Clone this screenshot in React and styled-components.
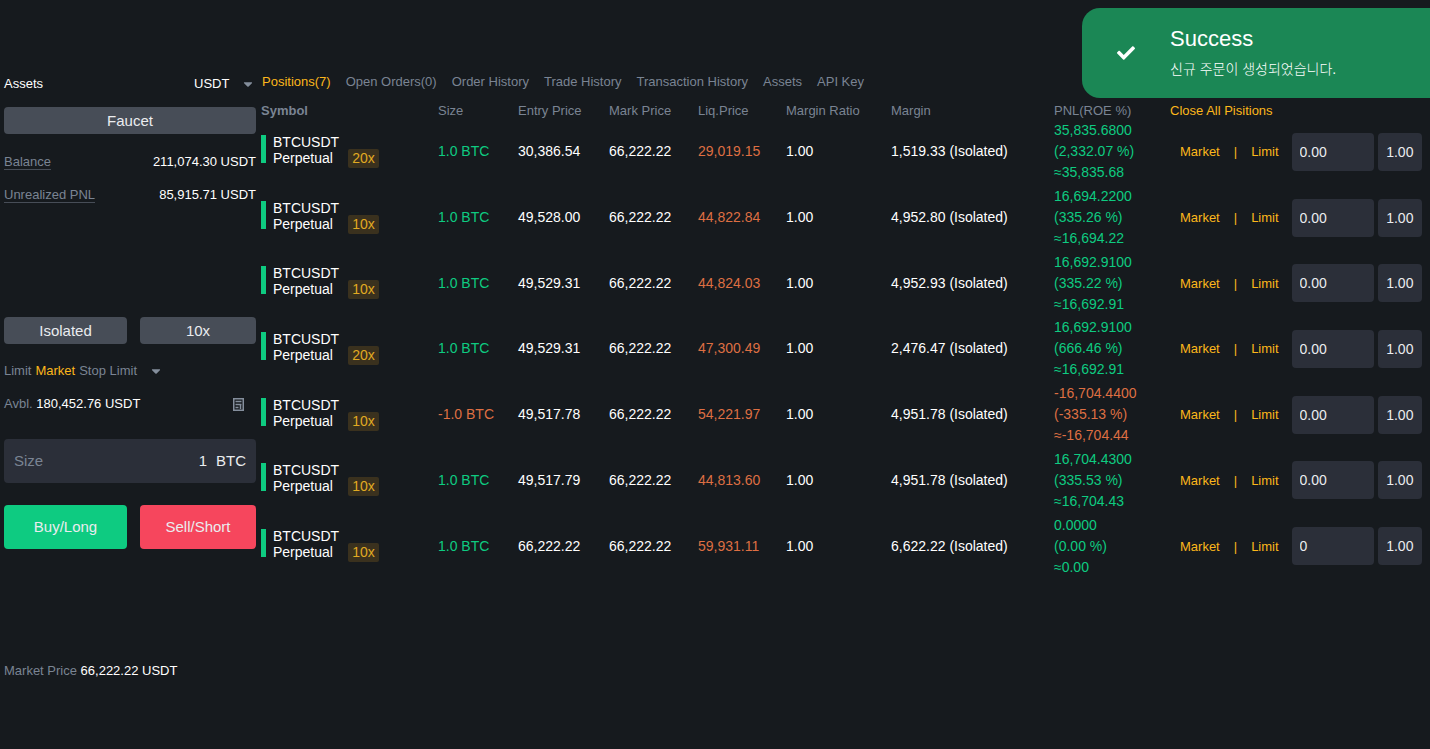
import React, { useState } from "react";
import styled, { createGlobalStyle } from "styled-components";
import { FaCaretDown, FaCheck } from "react-icons/fa";

const GlobalStyle = createGlobalStyle`
  * {
    box-sizing: border-box;
  }

  body {
    margin: 0;
    background: #161a1e;
    color: #fff;
    font-family: "Liberation Sans", "Noto Sans CJK KR", Arial, sans-serif;
    font-size: 13px;
    line-height: 20px;
  }

  button, input, select {
    margin: 0;
    border: 0;
    color: inherit;
    font: inherit;
  }

  button {
    padding: 0;
    background: none;
    cursor: pointer;
  }
`;

const Page = styled.main`
  display: flex;
  align-items: flex-start;
  gap: 5px;
  min-height: 100vh;
  padding: 72px 0 0 4px;
`;

const Sidebar = styled.aside`
  flex: 0 0 252px;
  min-width: 0;
`;

const Line = styled.div`
  display: flex;
  align-items: center;
  justify-content: ${props => props.$justify || "space-between"};
  gap: 4px;
  height: ${props => props.$height || 33}px;
`;

const Heading = styled.h2`
  margin: 0;
  font-size: 13px;
  font-weight: 400;
`;

const SelectBox = styled.label`
  display: flex;
  align-items: center;
  width: 62px;
`;

const Select = styled.select`
  flex: 1;
  width: 46px;
  padding: 0;
  background: transparent;
  appearance: none;
  outline: none;
`;

const Caret = styled(FaCaretDown)`
  width: 16px;
  height: 14px;
  color: #848e9c;
`;

const Pair = styled.div`
  display: grid;
  grid-template-columns: 123fr 116fr;
  gap: 13px;
`;

const GreyButton = styled.button`
  display: block;
  width: 100%;
  height: 27px;
  border-radius: 4px;
  background: #474d57;
  color: #eaecef;
  font-size: 15px;
`;

const OrderButton = styled.button`
  height: 44px;
  border-radius: 4px;
  background: ${props => props.color};
  color: #eaecef;
  font-size: 15px;
`;

const Label = styled.span`
  color: #7a8493;
`;

const Underlined = styled(Label)`
  border-bottom: 1px solid #474d57;
  line-height: 15px;
`;

const AssetBlock = styled.section`
  height: 245px;
`;

const AssetLines = styled.div`
  padding-top: 10px;
`;

const TypeButton = styled.button`
  color: ${props => (props.$active ? "#fcb71b" : "#7a8493")};
`;

const CaretButton = styled.button`
  display: flex;
  padding-left: 7px;
`;

const IconButton = styled.button`
  display: flex;
  padding: 2px 12px 0 0;
  color: #848e9c;
`;

const SizeField = styled.label`
  display: flex;
  align-items: center;
  height: 44px;
  margin: 19px 0 22px;
  padding: 0 10px;
  border-radius: 4px;
  background: #2b2f39;
  color: #eaecef;
  font-size: 15px;
`;

const SizeInput = styled.input`
  flex: 1;
  width: 0;
  min-width: 0;
  padding: 0 9px;
  background: transparent;
  text-align: right;
  outline: none;
`;

const MarketPrice = styled.p`
  margin: 112px 0 0;
`;

const Content = styled.section`
  flex: 1;
  min-width: 0;
`;

const Tabs = styled.nav`
  display: flex;
  gap: 15px;
  height: 29px;
  padding-left: 1px;
`;

const Tab = styled.button`
  height: 20px;
  color: ${props => (props.$active ? "#fcb71b" : "#7a8493")};
`;

const Table = styled.table`
  width: 100%;
  height: 478px;
  border-collapse: collapse;
  table-layout: fixed;
  font-size: 14px;
  white-space: nowrap;
`;

const Th = styled.th`
  width: ${props => props.$width}px;
  height: 18px;
  padding: 2px 0 0;
  color: #7a8493;
  font-size: 13px;
  font-weight: ${props => (props.$bold ? 700 : 400)};
  line-height: 16px;
  text-align: left;
`;

const Td = styled.td`
  padding: 0;
  color: ${props => props.color || "#fff"};
  line-height: 21px;
`;

const SymbolCell = styled.div`
  display: flex;
  height: 36px;
  line-height: 16px;
  padding-bottom: 2px;
`;

const SideBar = styled.span`
  width: 5px;
  height: 28px;
  margin: 1px 7px 0 0;
  background: #0ecb81;
`;

const Badge = styled.span`
  align-self: flex-end;
  margin-left: 9px;
  padding: 0 4px;
  border-radius: 2px;
  background: #3a311e;
  color: #e0aa22;
  line-height: 19px;
`;

const CloseAll = styled.button`
  color: #fcb71b;
`;

const Actions = styled.div`
  display: flex;
  align-items: center;
  padding: 0 8px 0 10px;
  color: #fcb71b;
  font-size: 13px;
`;

const Divider = styled.span`
  margin: 0 14px;
`;

const CellInput = styled.input`
  flex: ${props => props.$size} 1 ${props => props.$size}px;
  width: 0;
  min-width: 0;
  height: 38px;
  margin-left: ${props => props.$gap}px;
  padding: 0 8px;
  border-radius: 4px;
  background: #2b2f39;
  color: #eaecef;
  font-size: 14px;
  outline: none;
`;

const Toast = styled.div`
  position: fixed;
  top: 8px;
  right: 0;
  display: flex;
  align-items: center;
  width: 348px;
  height: 90px;
  border-radius: 18px 0 0 18px;
  background: #1b8755;
`;

const ToastIcon = styled.div`
  display: flex;
  justify-content: center;
  width: 88px;
  font-size: 18px;
`;

const ToastTitle = styled.h3`
  margin: 0;
  font-size: 22px;
  font-weight: 400;
  line-height: 32px;
`;

const ToastText = styled.p`
  margin: 0;
  font-size: 14px;
  font-weight: 300;
  line-height: 28px;
`;

const GREEN = "#0ecb81";
const ORANGE = "#de6f43";

const tabs = [
  "Positions(7)",
  "Open Orders(0)",
  "Order History",
  "Trade History",
  "Transaction History",
  "Assets",
  "API Key"
];

const columns = [
  ["Symbol", 177],
  ["Size", 80],
  ["Entry Price", 91],
  ["Mark Price", 89],
  ["Liq.Price", 88],
  ["Margin Ratio", 105],
  ["Margin", 163],
  ["PNL(ROE %)", 116]
];

const positions = [
  { lev: "20x", size: "1.0", entry: "30,386.54", liq: "29,019.15", margin: "1,519.33", pnl: "35,835.6800", roe: "2,332.07", approx: "35,835.68", price: "0.00" },
  { lev: "10x", size: "1.0", entry: "49,528.00", liq: "44,822.84", margin: "4,952.80", pnl: "16,694.2200", roe: "335.26", approx: "16,694.22", price: "0.00" },
  { lev: "10x", size: "1.0", entry: "49,529.31", liq: "44,824.03", margin: "4,952.93", pnl: "16,692.9100", roe: "335.22", approx: "16,692.91", price: "0.00" },
  { lev: "20x", size: "1.0", entry: "49,529.31", liq: "47,300.49", margin: "2,476.47", pnl: "16,692.9100", roe: "666.46", approx: "16,692.91", price: "0.00" },
  { lev: "10x", size: "-1.0", entry: "49,517.78", liq: "54,221.97", margin: "4,951.78", pnl: "-16,704.4400", roe: "-335.13", approx: "-16,704.44", price: "0.00" },
  { lev: "10x", size: "1.0", entry: "49,517.79", liq: "44,813.60", margin: "4,951.78", pnl: "16,704.4300", roe: "335.53", approx: "16,704.43", price: "0.00" },
  { lev: "10x", size: "1.0", entry: "66,222.22", liq: "59,931.11", margin: "6,622.22", pnl: "0.0000", roe: "0.00", approx: "0.00", price: "0" }
];

const CalculatorIcon = () => (
  <svg width="11" height="13" viewBox="0 0 11 13" fill="none" stroke="currentColor" strokeWidth="1.5">
    <path d="M.75.75h9.5v11.5H.75zM2.5 3.5h6M2.5 6.5h6M2.5 9.5h3M7.5 6v5" />
  </svg>
);

const PositionRow = ({ position }) => {
  const color = position.size.startsWith("-") ? ORANGE : GREEN;

  return (
    <tr>
      <Td>
        <SymbolCell>
          <SideBar />
          <span>
            BTCUSDT
            <br />
            Perpetual
          </span>
          <Badge>{position.lev}</Badge>
        </SymbolCell>
      </Td>
      <Td color={color}>{position.size} BTC</Td>
      <Td>{position.entry}</Td>
      <Td>66,222.22</Td>
      <Td color={ORANGE}>{position.liq}</Td>
      <Td>1.00</Td>
      <Td>{position.margin} (Isolated)</Td>
      <Td color={color}>
        {position.pnl}
        <br />({position.roe} %)
        <br />≈{position.approx}
      </Td>
      <Td>
        <Actions>
          <button>Market</button>
          <Divider>|</Divider>
          <button>Limit</button>
          <CellInput $size={83} $gap={13} aria-label="Price" defaultValue={position.price} />
          <CellInput $size={44} $gap={4} aria-label="Amount" defaultValue="1.00" />
        </Actions>
      </Td>
    </tr>
  );
};

const App = () => {
  const [tab, setTab] = useState("Positions(7)");
  const [type, setType] = useState("Market");

  return (
    <>
      <GlobalStyle />
      <Page>
        <Sidebar>
          <AssetBlock>
            <Line $height={24}>
              <Heading>Assets</Heading>
              <SelectBox>
                <Select aria-label="Asset" defaultValue="USDT">
                  <option>USDT</option>
                  <option>BTC</option>
                </Select>
                <Caret />
              </SelectBox>
            </Line>
            <Line $height={49}>
              <GreyButton>Faucet</GreyButton>
            </Line>
            <Line>
              <Underlined>Balance</Underlined>
              <span>211,074.30 USDT</span>
            </Line>
            <Line>
              <Underlined>Unrealized PNL</Underlined>
              <span>85,915.71 USDT</span>
            </Line>
          </AssetBlock>
          <Pair>
            <GreyButton>Isolated</GreyButton>
            <GreyButton>10x</GreyButton>
          </Pair>
          <AssetLines>
            <Line $justify="flex-start">
              {["Limit", "Market", "Stop Limit"].map(name => (
                <TypeButton key={name} $active={name === type} onClick={() => setType(name)}>
                  {name}
                </TypeButton>
              ))}
              <CaretButton aria-label="More order types">
                <Caret />
              </CaretButton>
            </Line>
            <Line>
              <span>
                <Label>Avbl.</Label> 180,452.76 USDT
              </span>
              <IconButton aria-label="Calculator">
                <CalculatorIcon />
              </IconButton>
            </Line>
          </AssetLines>
          <SizeField>
            <Label>Size</Label>
            <SizeInput defaultValue="1" />
            <span>BTC</span>
          </SizeField>
          <Pair>
            <OrderButton color="#0ecb81">Buy/Long</OrderButton>
            <OrderButton color="#f6465d">Sell/Short</OrderButton>
          </Pair>
          <MarketPrice>
            <Label>Market Price</Label> 66,222.22 USDT
          </MarketPrice>
        </Sidebar>
        <Content>
          <Tabs>
            {tabs.map(name => (
              <Tab key={name} $active={name === tab} onClick={() => setTab(name)}>
                {name}
              </Tab>
            ))}
          </Tabs>
          <Table>
            <thead>
              <tr>
                {columns.map(([name, width]) => (
                  <Th key={name} $width={width} $bold={name === "Symbol"}>
                    {name}
                  </Th>
                ))}
                <Th $width={260}>
                  <CloseAll>Close All Pisitions</CloseAll>
                </Th>
              </tr>
            </thead>
            <tbody>
              {positions.map((position, i) => (
                <PositionRow key={i} position={position} />
              ))}
            </tbody>
          </Table>
        </Content>
      </Page>
      <Toast role="status">
        <ToastIcon>
          <FaCheck />
        </ToastIcon>
        <div>
          <ToastTitle>Success</ToastTitle>
          <ToastText>신규 주문이 생성되었습니다.</ToastText>
        </div>
      </Toast>
    </>
  );
};

export default App;
